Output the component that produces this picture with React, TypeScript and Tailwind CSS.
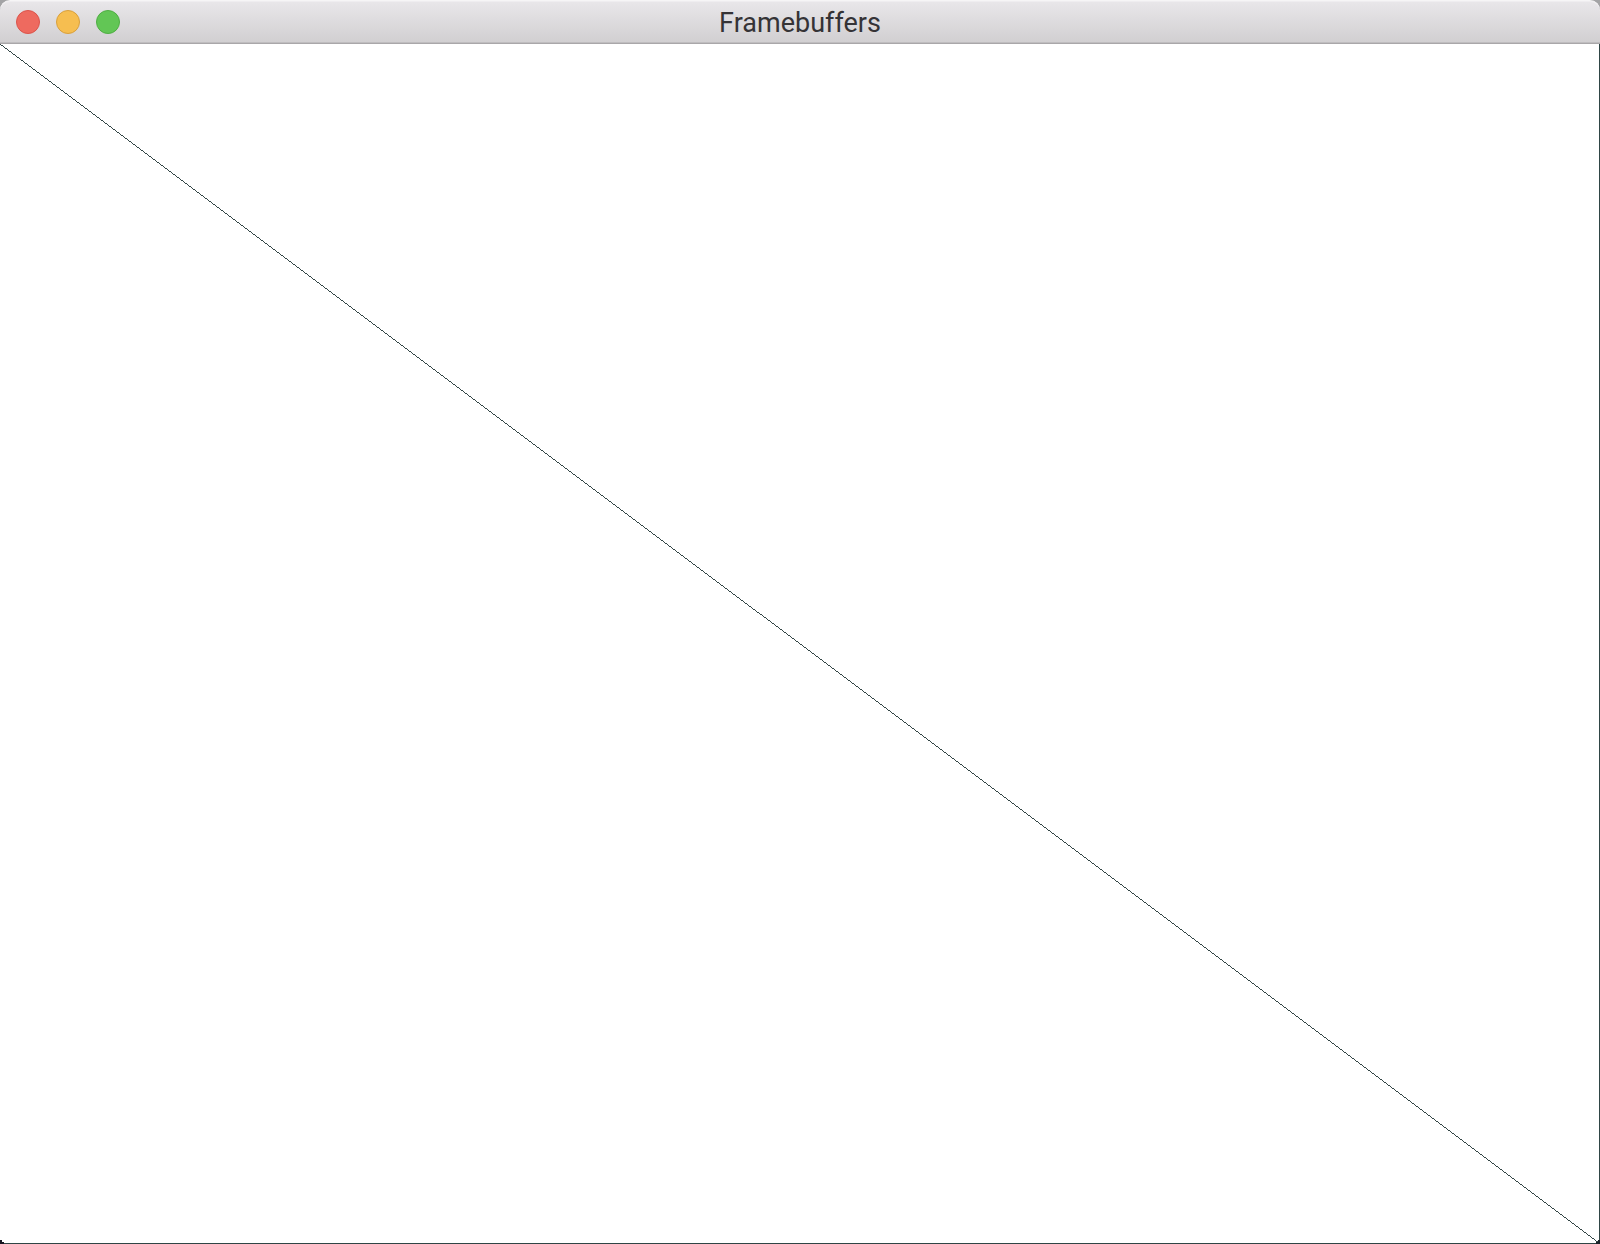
const windowControls = [
  { label: 'Close', look: 'border-[#dc544b] bg-[#ee6a5f]' },
  { label: 'Minimize', look: 'border-[#d9a03c] bg-[#f6be50]' },
  { label: 'Zoom', look: 'border-[#4fae43] bg-[#62c655]' },
];

function TitleBar() {
  return (
    <header className="grid h-11 shrink-0 grid-cols-[1fr_auto_1fr] items-center rounded-t-[10px] border-t border-b border-t-[#f6f5f6] border-b-[#a9a7a9] bg-linear-to-b from-[#e9e7ea] to-[#d1cfd1] px-4 shadow-[inset_0_1px_0_#efedf0,inset_0_-1px_0_#bfbdbf]">
      <div className="flex gap-4">
        {windowControls.map(({ label, look }) => (
          <button key={label} type="button" aria-label={label} className={`size-6 rounded-full border ${look}`} />
        ))}
      </div>
      <h1 className="pt-0.5 font-['Roboto',sans-serif] text-[27px] leading-8 text-[#353336]">Framebuffers</h1>
    </header>
  );
}

function Viewport() {
  return (
    <main className="relative flex-1 border-r border-b border-[#2f4545] bg-white">
      <svg className="absolute inset-0 size-full" aria-hidden="true" shapeRendering="crispEdges">
        <line x1="0" y1="0" x2="100%" y2="100%" stroke="#001616" strokeWidth="0.8" />
      </svg>
      <svg className="absolute -bottom-px left-0 h-1 w-1" viewBox="0 0 4 4" aria-hidden="true" shapeRendering="crispEdges">
        <path d="M0 0H2V2H4V4H0Z" fill="#171520" />
      </svg>
      <svg className="absolute -right-px -bottom-px h-1 w-1" viewBox="0 0 4 4" aria-hidden="true" shapeRendering="crispEdges">
        <path d="M4 0H2V2H0V4H4Z" fill="#1b2229" />
      </svg>
    </main>
  );
}

export default function App() {
  return (
    <div className="flex h-screen flex-col bg-[#a3a3a5]">
      <TitleBar />
      <Viewport />
    </div>
  );
}
